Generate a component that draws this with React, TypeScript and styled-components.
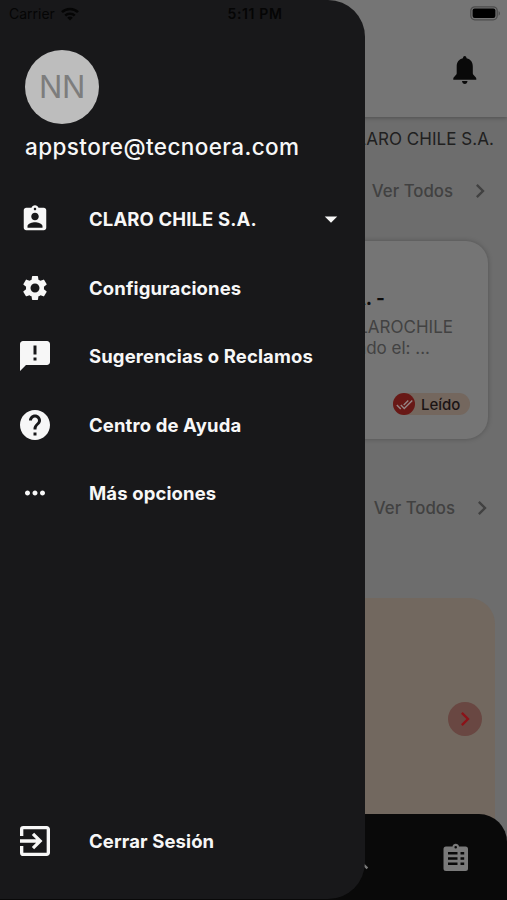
import React from 'react';
import styled, { createGlobalStyle } from 'styled-components';
import {
  MdAssignmentInd,
  MdSettings,
  MdAnnouncement,
  MdHelp,
  MdMoreHoriz,
  MdExitToApp,
  MdArrowDropDown,
  MdChevronRight,
  MdDoneAll,
  MdSearch,
} from 'react-icons/md';

const Global = createGlobalStyle`
  * { box-sizing: border-box; }
  body { margin: 0; background: #6d6d6d; font-family: Inter, "Liberation Sans", sans-serif; }
`;

const Shell = styled.div`
  display: grid;
  width: 507px;
  height: 900px;
  overflow: hidden;
  & > * { grid-area: 1 / 1; }
`;

/* Dimmed page behind the drawer */
const Page = styled.main`
  display: flex;
  flex-direction: column;
  height: 900px;
  background: #6d6d6d;
`;

const Header = styled.header`
  display: flex;
  justify-content: flex-end;
  align-items: flex-start;
  flex: none;
  height: 117px;
  padding: 55px 29px 0 0;
  background: #757575;
  box-shadow: 0 1px 4px rgba(0, 0, 0, 0.28);
`;

const Content = styled.div`
  flex: 1;
  display: flex;
  flex-direction: column;
  align-items: flex-end;
  min-height: 0;
`;

const Company = styled.div`
  margin-top: 12px;
  padding-right: 13px;
  font-size: 17px;
  line-height: 20px;
  letter-spacing: 0.05px;
  color: #202020;
  white-space: nowrap;
`;

const SeeAll = styled.div<{ $top: number; $right: number }>`
  display: flex;
  align-items: center;
  gap: 13px;
  height: 26px;
  margin-top: ${(p) => p.$top}px;
  padding-right: ${(p) => p.$right}px;
  font-size: 16.8px;
  font-weight: 500;
  letter-spacing: 0;
  color: #414141;
  white-space: nowrap;
`;

const Card = styled.article`
  display: flex;
  flex-direction: column;
  align-items: flex-end;
  width: 460px;
  height: 198px;
  margin: 37px 19px 0 0;
  background: #757575;
  border-radius: 22px;
  box-shadow: 0 0 5px rgba(0, 0, 0, 0.25);
`;

const CardTitle = styled.div`
  margin: 46px 103px 6px 0;
  font-size: 19px;
  line-height: 24px;
  font-weight: 700;
  color: #0c0c0c;
`;

const CardText = styled.div<{ $right: number }>`
  margin-right: ${(p) => p.$right}px;
  font-size: 17px;
  line-height: 21px;
  color: #424242;
  white-space: nowrap;
`;

const Badge = styled.div`
  display: flex;
  align-items: center;
  gap: 6px;
  width: 77px;
  height: 22px;
  margin: 34px 18px 0 0;
  border-radius: 11px;
  background: #74675e;
  color: #1b1414;
  font-size: 15px;
  font-weight: 500;
`;

const BadgeDot = styled.span`
  display: grid;
  place-items: center;
  width: 22px;
  height: 22px;
  border-radius: 50%;
  background: #681816;
  color: #958585;
`;

const Promo = styled.section`
  flex: 1;
  display: flex;
  justify-content: flex-end;
  width: 470px;
  margin: 77px 12px 0 0;
  padding: 104px 13px 0 0;
  border-radius: 26px 26px 0 0;
  background: #72685f;
`;

const RoundButton = styled.button`
  display: grid;
  place-items: center;
  width: 34px;
  height: 34px;
  padding: 0;
  border: 0;
  border-radius: 50%;
  background: #694742;
  color: #8c1218;
`;

const TabBarSlot = styled.div`
  flex: none;
  background: linear-gradient(90deg, #72685f 495px, #6d6d6d 495px);
`;

const TabBar = styled.nav`
  display: flex;
  justify-content: flex-end;
  align-items: flex-start;
  gap: 71px;
  height: 86px;
  padding: 29px 38px 0 0;
  border-radius: 0 28px 0 0;
  background: #090909;
  color: #7a7a7a;
`;

const SearchSlot = styled.span`
  display: flex;
  padding-top: 4px;
`;

/* Side menu */
const Drawer = styled.aside`
  display: flex;
  flex-direction: column;
  width: 365px;
  height: 899px;
  border-radius: 0 37px 37px 0;
  background: #18181a;
  color: #f7f7f7;
`;

const Avatar = styled.div`
  display: grid;
  place-items: center;
  width: 74px;
  height: 74px;
  margin: 49.5px 0 0 25px;
  border-radius: 50%;
  background: #bdbdbd;
  color: #7d7d7d;
  font-size: 31px;
  font-weight: 400;
  letter-spacing: -0.3px;
`;

const Email = styled.div`
  margin: 9px 0 0 25px;
  font-size: 22.5px;
  line-height: 28px;
  font-weight: 500;
  letter-spacing: 0.4px;
  white-space: nowrap;
`;

const Menu = styled.nav`
  display: flex;
  flex-direction: column;
  flex: 1;
  padding: 24.7px 0 24px;
`;

const MenuRow = styled.a<{ $last?: boolean }>`
  display: grid;
  grid-template-columns: 70px 1fr 30px;
  column-gap: 19px;
  align-items: center;
  height: 68.4px;
  padding-right: 19px;
  margin-top: ${(p) => (p.$last ? 'auto' : '0')};
  font-size: 18.5px;
  font-weight: 700;
  letter-spacing: 0.12px;
  white-space: nowrap;
`;

const MenuIcon = styled.span`
  display: grid;
  place-items: center;
`;

/* System status bar */
const StatusBar = styled.div`
  display: grid;
  grid-template-columns: 1fr auto 1fr;
  align-items: center;
  height: 27px;
  padding: 0 6px 0 9px;
  font-size: 14px;
  color: #050505;
`;

const Carrier = styled.div`
  display: flex;
  align-items: center;
  gap: 6px;
`;

const Clock = styled.div`
  font-weight: 600;
  letter-spacing: 0.6px;
`;

const BatterySlot = styled.div`
  display: flex;
  justify-content: flex-end;
`;

const Bell = () => (
  <svg width="26" height="30" viewBox="0 0 26 30" fill="#090909">
    <path d="M12.700 1c1 0 1.600.9 1.900 2.200 4 1 6.200 3.900 6.200 8.200v6.800c0 1.900 3.500 3.800 3.500 5.200v1.300H1.300v-1.300c0-1.400 3.400-3.300 3.400-5.200v-6.800c0-4.300 2.200-7.200 6.200-8.200C11.200 1.900 11.700 1 12.700 1z" />
    <path d="M10 26h5.500c-.2 1.900-1.300 2.900-2.700 2.900S10.200 27.900 10 26z" />
  </svg>
);

const Wifi = () => (
  <svg width="18" height="14" viewBox="0 0 18 14" fill="none" stroke="#050505" strokeWidth="2.600">
    <path d="M1 5.100C5.300.9 12.700.9 17 5.100" />
    <path d="M4.300 8.600c2.500-2.500 6.900-2.500 9.400 0" />
    <path d="M9 13.400 6.200 10.700c1.500-1.500 4.100-1.500 5.600 0z" fill="#050505" stroke="none" />
  </svg>
);

const Battery = () => (
  <svg width="31" height="15" viewBox="0 0 31 15">
    <rect x=".8" y=".8" width="26.400" height="13" rx="4" fill="none" stroke="#4c4c4c" strokeWidth="1.300" />
    <rect x="2.600" y="2.600" width="22.800" height="9.400" rx="2" fill="#000" />
    <path d="M28.600 4.900c1.800.8 1.800 4 0 4.800z" fill="#4c4c4c" />
  </svg>
);

const Clipboard = () => (
  <svg width="26" height="28" viewBox="0 0 26 28">
    <path
      fill="#7a7a7a"
      fillRule="evenodd"
      d="M3 3.500h6.500a3.300 3.300 0 0 1 6.500 0h6.500A2.500 2.500 0 0 1 25 6v19.500a2.500 2.500 0 0 1-2.500 2.500H3A2.500 2.500 0 0 1 .5 25.500V6A2.500 2.500 0 0 1 3 3.500zM12.700 3a1.300 1.300 0 1 0 0 2.600 1.300 1.300 0 0 0 0-2.600zM5 9v2.500h9.500V9zm12.500 0v2.500h3.700V9zM5 14.300v2.500h9.500v-2.500zm12.500 0v2.500h3.700v-2.500zM5 19.600v2.500h9.500v-2.500zm12.500 0v2.500h3.700v-2.500z"
    />
  </svg>
);

const items = [
  { label: 'CLARO CHILE S.A.', icon: <MdAssignmentInd size={30} />, more: true },
  { label: 'Configuraciones', icon: <MdSettings size={30} /> },
  { label: 'Sugerencias o Reclamos', icon: <MdAnnouncement size={36} /> },
  { label: 'Centro de Ayuda', icon: <MdHelp size={36} /> },
  { label: 'Más opciones', icon: <MdMoreHoriz size={30} /> },
];

export default function App() {
  return (
    <>
      <Global />
      <Shell>
        <Page>
          <Header>
            <Bell />
          </Header>
          <Content>
            <Company>CLARO CHILE S.A.</Company>
            <SeeAll $top={29} $right={13}>
              Ver Todos <MdChevronRight size={28} />
            </SeeAll>
            <Card>
              <CardTitle>S.A. -</CardTitle>
              <CardText $right={35}>CLAROCHILE</CardText>
              <CardText $right={58}>enviado el: ...</CardText>
              <Badge>
                <BadgeDot>
                  <MdDoneAll size={17} />
                </BadgeDot>
                Leído
              </Badge>
            </Card>
            <SeeAll $top={56} $right={11}>
              Ver Todos <MdChevronRight size={28} />
            </SeeAll>
            <Promo>
              <RoundButton>
                <MdChevronRight size={28} />
              </RoundButton>
            </Promo>
          </Content>
          <TabBarSlot>
            <TabBar>
              <SearchSlot>
                <MdSearch size={26} />
              </SearchSlot>
              <Clipboard />
            </TabBar>
          </TabBarSlot>
        </Page>
        <Drawer>
          <Avatar>NN</Avatar>
          <Email>appstore@tecnoera.com</Email>
          <Menu>
            {items.map((item) => (
              <MenuRow key={item.label}>
                <MenuIcon>{item.icon}</MenuIcon>
                <span>{item.label}</span>
                {item.more && <MdArrowDropDown size={30} />}
              </MenuRow>
            ))}
            <MenuRow $last>
              <MenuIcon>
                <MdExitToApp size={40} />
              </MenuIcon>
              <span>Cerrar Sesión</span>
            </MenuRow>
          </Menu>
        </Drawer>
        <StatusBar>
          <Carrier>
            Carrier <Wifi />
          </Carrier>
          <Clock>5:11 PM</Clock>
          <BatterySlot>
            <Battery />
          </BatterySlot>
        </StatusBar>
      </Shell>
    </>
  );
}
